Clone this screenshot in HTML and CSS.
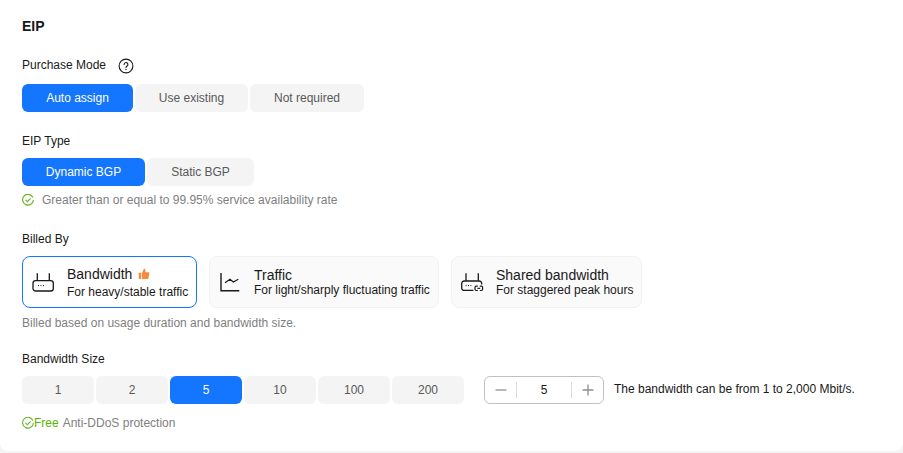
FILE: index.html
```html
<!DOCTYPE html>
<html lang="en">
<head>
<meta charset="utf-8">
<title>EIP</title>
<link rel="stylesheet" href="styles.css">
</head>
<body>
<main class="panel">
  <h2 class="title">EIP</h2>

  <div class="label label-help">
    <span>Purchase Mode</span>
    <svg class="help" width="16" height="16" viewBox="0 0 16 16" fill="none" stroke="#191919">
      <circle cx="8" cy="8" r="6.9" stroke-width="1.1"/>
      <path d="M6.1 6.5a1.9 1.9 0 1 1 2.9 1.6c-.7.4-1 .8-1 1.5" stroke-width="1.1" stroke-linecap="round"/>
      <path d="M8 11.1v.9" stroke-width="1.2"/>
    </svg>
  </div>
  <div class="seg">
    <button class="opt on w111">Auto assign</button>
    <button class="opt w113">Use existing</button>
    <button class="opt w114">Not required</button>
  </div>

  <div class="label label-type">EIP Type</div>
  <div class="seg">
    <button class="opt on w123">Dynamic BGP</button>
    <button class="opt w107">Static BGP</button>
  </div>
  <div class="note note-type">
    <svg width="12" height="12" viewBox="0 0 12 12" fill="none" stroke="#6fb52c" stroke-width="1.2">
      <path d="M10.9 3.4A5.4 5.4 0 1 0 11.4 6"/>
      <path d="M3.5 5.8 5.4 7.7 8.7 4.4"/>
    </svg>
    <span>Greater than or equal to 99.95% service availability rate</span>
  </div>

  <div class="label label-billed">Billed By</div>
  <div class="cards">
    <div class="card selected w175">
      <svg class="cicon" width="24" height="24" viewBox="0 0 24 24" fill="none" stroke="#191919" stroke-width="1.3">
        <rect x="1" y="10.7" width="20.3" height="10.3" rx="2.6"/>
        <path d="M5.3 10.5V3.3M17.3 10.5V3.3"/>
        <path d="M6 15.6h1M8.5 15.6h1M11 15.6h1" stroke-width="1"/>
      </svg>
      <div class="ctext">
        <div class="cname cname-first">Bandwidth
          <svg class="thumb" width="12" height="12" viewBox="0 0 12 12" fill="#f58b3c">
            <rect x="0.8" y="4.8" width="2.4" height="6.2" rx=".4"/>
            <path d="M4 4.9 5.9.8c.9 0 1.5.6 1.5 1.4v2h2.9c.7 0 1.1.6 1 1.2l-.8 4.6c-.1.6-.5 1-1.1 1H4z"/>
          </svg>
        </div>
        <div class="cdesc cdesc-first">For heavy/stable traffic</div>
      </div>
    </div>
    <div class="card w230">
      <svg class="cicon" width="24" height="24" viewBox="0 0 24 24" fill="none" stroke="#191919" stroke-width="1.4">
        <path d="M2 3V20.7H20.3"/>
        <path d="M6 12.7 11 9.3 14.3 12 19.3 9.3" stroke-width="1.2"/>
      </svg>
      <div class="ctext">
        <div class="cname">Traffic</div>
        <div class="cdesc">For light/sharply fluctuating traffic</div>
      </div>
    </div>
    <div class="card w191">
      <svg class="cicon" width="24" height="24" viewBox="0 0 24 24" fill="none" stroke="#191919" stroke-width="1.3">
        <path d="M12.4 20.4H3.2A2.5 2.5 0 0 1 .7 17.9V13.5A2.5 2.5 0 0 1 3.2 11H18.2A2.5 2.5 0 0 1 20.7 13.5V14.6"/>
        <path d="M5 10.8V3.3M17.3 10.8V3.3"/>
        <path d="M4.6 15.6h1M7 15.6h1M9.4 15.6h1" stroke-width="1"/>
        <path d="M16.8 16.2H15.2A1.2 1.2 0 0 0 14 17.4V19.3A1.2 1.2 0 0 0 15.2 20.5H16.8" stroke-width="1.2"/>
        <path d="M18.8 16.2H20.4A1.2 1.2 0 0 1 21.6 17.4V19.3A1.2 1.2 0 0 1 20.4 20.5H18.8" stroke-width="1.2"/>
        <path d="M16.4 18.35H19.2" stroke-width="1.2"/>
      </svg>
      <div class="ctext">
        <div class="cname">Shared bandwidth</div>
        <div class="cdesc">For staggered peak hours</div>
      </div>
    </div>
  </div>
  <div class="note note-billed"><span>Billed based on usage duration and bandwidth size.</span></div>

  <div class="label label-size">Bandwidth Size</div>
  <div class="sizes">
    <div class="seg">
      <button class="opt w72">1</button>
      <button class="opt w72">2</button>
      <button class="opt on w72">5</button>
      <button class="opt w72">10</button>
      <button class="opt w72">100</button>
      <button class="opt w72">200</button>
    </div>
    <div class="stepper">
      <span class="step">
        <svg width="12" height="12" viewBox="0 0 12 12" stroke="#9a9a9a" stroke-width="1.4"><path d="M.5 6h11"/></svg>
      </span>
      <span class="value">5</span>
      <span class="step">
        <svg width="12" height="12" viewBox="0 0 12 12" stroke="#8f8f8f" stroke-width="1.3"><path d="M.5 6h11M6 .5v11"/></svg>
      </span>
    </div>
    <span class="range">The bandwidth can be from 1 to 2,000 Mbit/s.</span>
  </div>
  <div class="note note-free">
    <svg width="12" height="12" viewBox="0 0 12 12" fill="none" stroke="#6fb52c" stroke-width="1.1">
      <path d="M10.9 3.4A5.4 5.4 0 1 0 11.4 6"/>
      <path d="M3.5 5.8 5.4 7.7 8.7 4.4"/>
    </svg>
    <span class="free">Free</span>
    <span>Anti-DDoS protection</span>
  </div>
</main>
</body>
</html>
```

FILE: styles.css
```css
* {
  box-sizing: border-box;
}

html,
body {
  margin: 0;
  height: 453px;
  overflow: hidden;
  background: #f5f5f5;
}

body {
  font-family: "Liberation Sans", Arial, sans-serif;
  font-size: 12px;
  color: #191919;
}

.panel {
  height: 451px;
  padding: 18px 22px 0;
  background: #fff;
  border-radius: 0 0 8px 8px;
}

.title {
  margin: 0;
  font-size: 14px;
  line-height: 16px;
  font-weight: 700;
}

.label {
  display: flex;
  height: 16px;
  line-height: 16px;
}

.label-help {
  align-items: flex-start;
  gap: 12px;
  height: 18px;
  margin-top: 22px;
  padding-top: 1px;
}

.help {
  margin-top: 1px;
}

.label-type {
  margin-top: 20px;
  padding-top: 1px;
}

.label-billed {
  margin-top: 23px;
}

.label-size {
  margin-top: 19px;
  padding-top: 1px;
}

.seg {
  display: flex;
  gap: 2px;
  margin-top: 10px;
}

.opt {
  height: 28px;
  padding: 0;
  border: 0;
  border-radius: 6px;
  background: #f4f4f4;
  color: #595959;
  font: inherit;
}

.opt.on {
  background: #1476ff;
  color: #fff;
}

.w72 { width: 72px; }
.w107 { width: 107px; }
.w111 { width: 111px; }
.w113 { width: 113px; }
.w114 { width: 114px; }
.w123 { width: 123px; }

.note {
  display: flex;
  align-items: center;
  line-height: 16px;
  color: #808080;
}

.note-type {
  gap: 8px;
  margin-top: 6px;
}

.note-billed {
  margin-top: 7px;
}

.note-free {
  margin-top: 11px;
}

.free {
  margin-right: 4px;
  color: #5cb300;
}

.cards {
  display: flex;
  gap: 12px;
  margin-top: 9px;
}

.card {
  display: flex;
  align-items: center;
  gap: 11px;
  height: 52px;
  padding-left: 9px;
  border: 1px solid #f2f2f2;
  border-radius: 8px;
  background: #fafafa;
}

.card.selected {
  border-color: #1476ff;
  background: #fff;
}

.w175 { width: 175px; }
.w191 { width: 191px; }
.w230 { width: 230px; }

.ctext {
  white-space: nowrap;
}

.cname {
  font-size: 14px;
  line-height: 15px;
}

.cname-first {
  line-height: 18px;
}

.thumb {
  margin-left: 2px;
  vertical-align: -1px;
}

.cdesc {
  line-height: 14px;
}

.cdesc-first {
  margin-top: 2px;
}

.sizes {
  display: flex;
  align-items: flex-start;
}

.stepper {
  display: flex;
  align-items: center;
  width: 120px;
  height: 28px;
  margin: 10px 0 0 20px;
  border: 1px solid #c2c2c2;
  border-radius: 6px;
}

.step {
  display: flex;
  flex: 0 0 32px;
  align-items: center;
  justify-content: center;
  height: 16px;
}

.step:first-child {
  border-right: 1px solid #dcdcdc;
}

.step:last-child {
  border-left: 1px solid #dcdcdc;
}

.value {
  flex: 1;
  text-align: center;
}

.range {
  margin: 10px 0 0 10px;
  line-height: 26px;
  white-space: nowrap;
}
```
